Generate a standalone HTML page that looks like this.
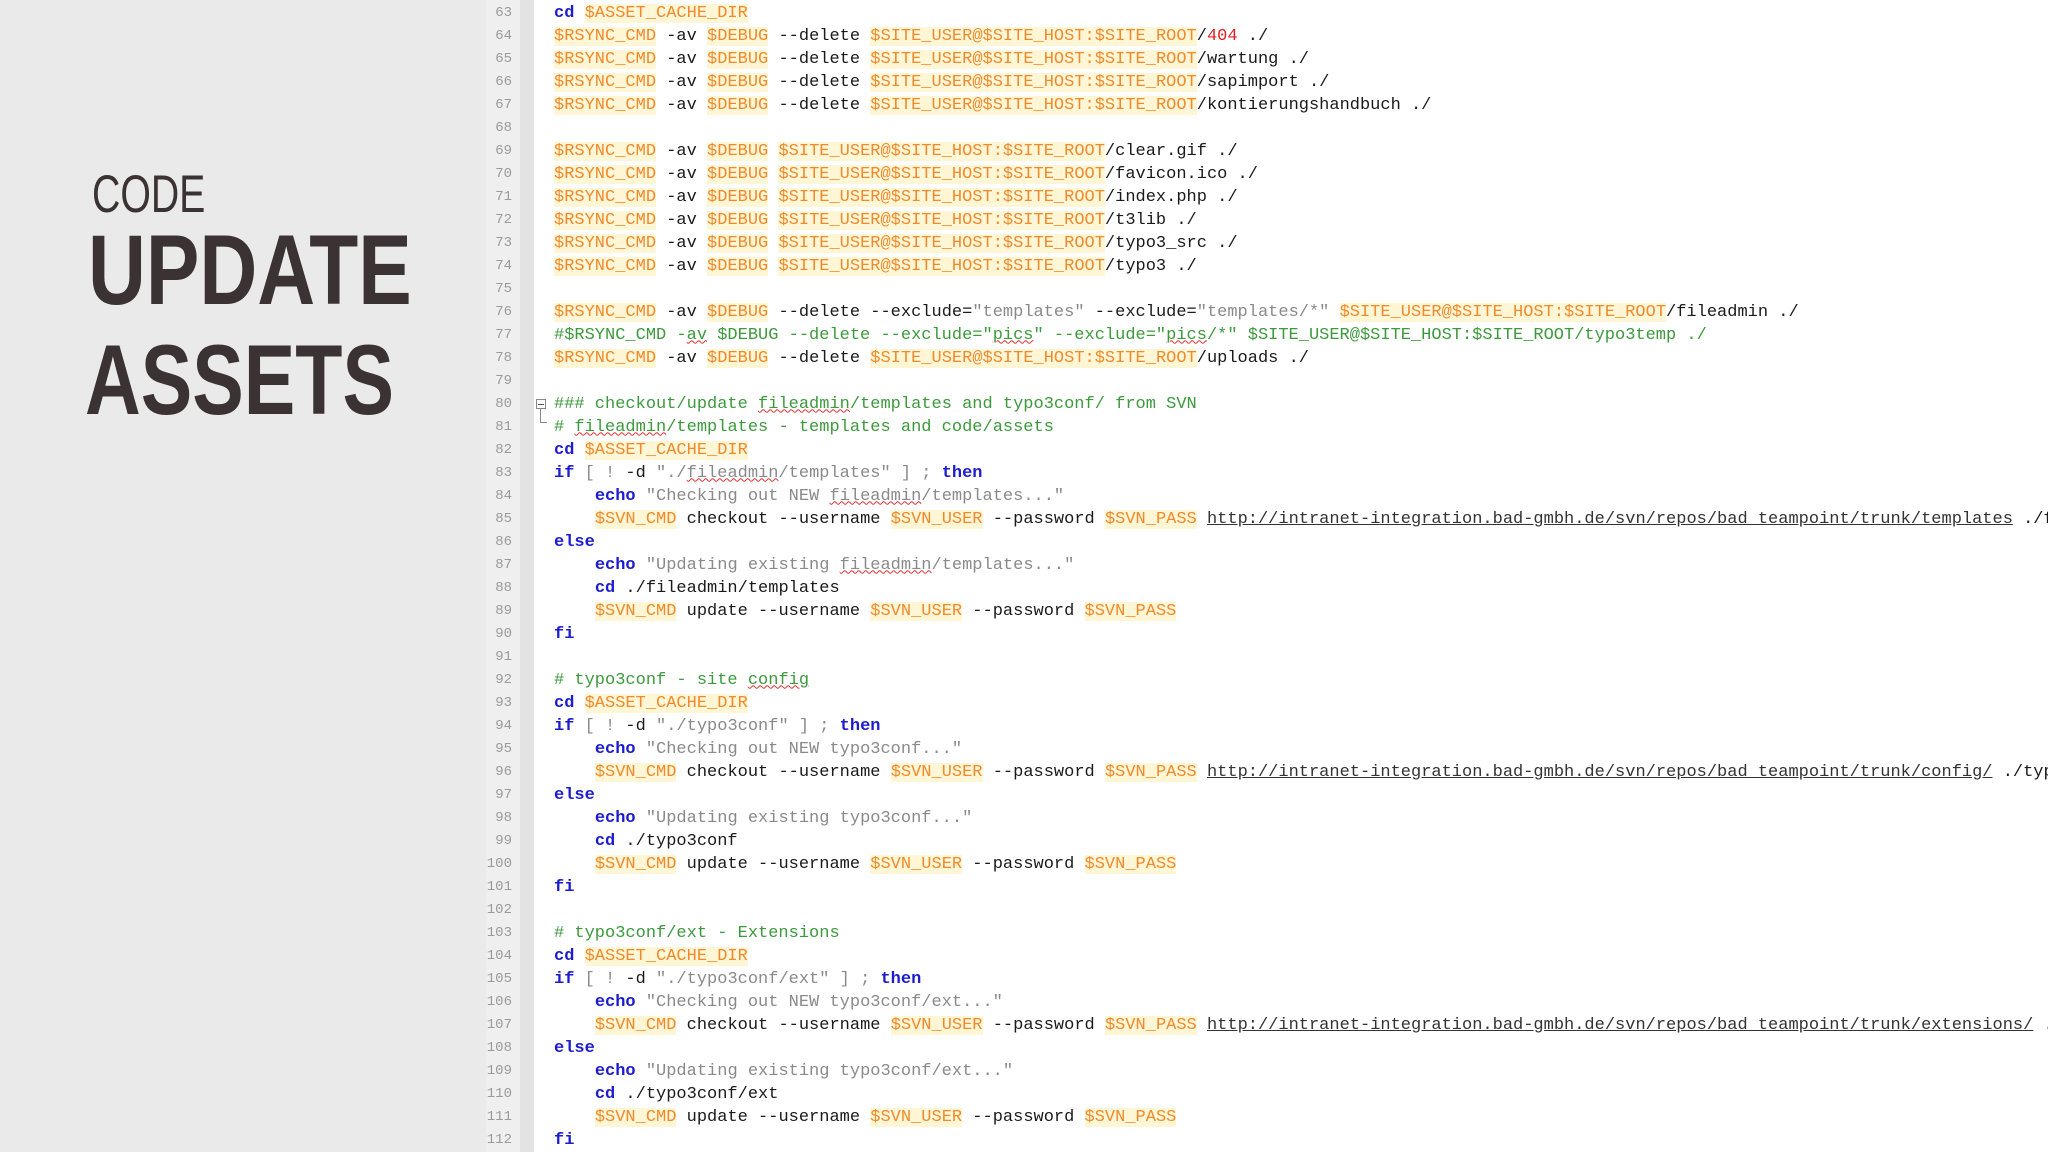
<!DOCTYPE html>
<html><head><meta charset="utf-8"><style>
html,body{margin:0;padding:0;width:2048px;height:1152px;overflow:hidden;background:#ebeaea;}
.title{position:absolute;color:#3b3234;font-family:"Liberation Sans",sans-serif;white-space:nowrap;transform-origin:0 0;}
#gut{position:absolute;left:486px;top:0;width:34px;height:1152px;background:#efefef;}
#gut2{position:absolute;left:520px;top:0;width:14px;height:1152px;background:#e3e3e3;}
#code{position:absolute;left:534px;top:0;width:1514px;height:1152px;background:#fff;overflow:hidden;}
pre{margin:0;position:absolute;font-family:"Liberation Mono","Courier New",monospace;line-height:23px;white-space:pre;}
#ln{left:486px;width:26px;top:1.5px;font-size:14px;color:#9a9a9a;text-align:right;}
#src{left:20px;top:1.5px;font-size:17px;color:#1a1a1a;}
.v{color:#f08a2c;background:#fff6d6;font-style:normal;}
.k{color:#1d1dcf;font-weight:bold;}
.c{color:#3c9a3c;}
.s{color:#8a8a8a;}
.r{color:#e02020;}
.u{text-decoration:underline;color:#333;}
.w{text-decoration:underline wavy #e03030;text-decoration-thickness:1px;}
#fold{position:absolute;left:536px;top:399px;width:8px;height:8px;border:1px solid #888;background:#fff;}
#fold:after{content:"";position:absolute;left:1px;top:3.5px;width:6px;height:1px;background:#555;}
#fl{position:absolute;left:540px;top:409px;width:6px;height:13px;border-left:1px solid #888;border-bottom:1px solid #888;}
</style></head><body>
<div class="title" style="left:92px;top:164px;font-size:53px;transform:scaleX(0.74);">CODE</div>
<div class="title" style="left:88px;top:213px;font-size:99px;font-weight:bold;transform:scaleX(0.81);">UPDATE</div>
<div class="title" style="left:85px;top:323px;font-size:99px;font-weight:bold;transform:scaleX(0.78);">ASSETS</div>
<div id="gut"></div><div id="gut2"></div>
<pre id="ln">63
64
65
66
67
68
69
70
71
72
73
74
75
76
77
78
79
80
81
82
83
84
85
86
87
88
89
90
91
92
93
94
95
96
97
98
99
100
101
102
103
104
105
106
107
108
109
110
111
112</pre>
<div id="code"><pre id="src"><span class="k">cd</span> <i class="v">$ASSET_CACHE_DIR</i>
<i class="v">$RSYNC_CMD</i> -av <i class="v">$DEBUG</i> --delete <i class="v">$SITE_USER@$SITE_HOST:$SITE_ROOT</i>/<span class="r">404</span> ./
<i class="v">$RSYNC_CMD</i> -av <i class="v">$DEBUG</i> --delete <i class="v">$SITE_USER@$SITE_HOST:$SITE_ROOT</i>/wartung ./
<i class="v">$RSYNC_CMD</i> -av <i class="v">$DEBUG</i> --delete <i class="v">$SITE_USER@$SITE_HOST:$SITE_ROOT</i>/sapimport ./
<i class="v">$RSYNC_CMD</i> -av <i class="v">$DEBUG</i> --delete <i class="v">$SITE_USER@$SITE_HOST:$SITE_ROOT</i>/kontierungshandbuch ./

<i class="v">$RSYNC_CMD</i> -av <i class="v">$DEBUG</i> <i class="v">$SITE_USER@$SITE_HOST:$SITE_ROOT</i>/clear.gif ./
<i class="v">$RSYNC_CMD</i> -av <i class="v">$DEBUG</i> <i class="v">$SITE_USER@$SITE_HOST:$SITE_ROOT</i>/favicon.ico ./
<i class="v">$RSYNC_CMD</i> -av <i class="v">$DEBUG</i> <i class="v">$SITE_USER@$SITE_HOST:$SITE_ROOT</i>/index.php ./
<i class="v">$RSYNC_CMD</i> -av <i class="v">$DEBUG</i> <i class="v">$SITE_USER@$SITE_HOST:$SITE_ROOT</i>/t3lib ./
<i class="v">$RSYNC_CMD</i> -av <i class="v">$DEBUG</i> <i class="v">$SITE_USER@$SITE_HOST:$SITE_ROOT</i>/typo3_src ./
<i class="v">$RSYNC_CMD</i> -av <i class="v">$DEBUG</i> <i class="v">$SITE_USER@$SITE_HOST:$SITE_ROOT</i>/typo3 ./

<i class="v">$RSYNC_CMD</i> -av <i class="v">$DEBUG</i> --delete --exclude=<span class="s">"templates"</span> --exclude=<span class="s">"templates/*"</span> <i class="v">$SITE_USER@$SITE_HOST:$SITE_ROOT</i>/fileadmin ./
<span class="c">#$RSYNC_CMD -<span class="w">av</span> $DEBUG --delete --exclude="<span class="w">pics</span>" --exclude="<span class="w">pics</span>/*" $SITE_USER@$SITE_HOST:$SITE_ROOT/typo3temp ./</span>
<i class="v">$RSYNC_CMD</i> -av <i class="v">$DEBUG</i> --delete <i class="v">$SITE_USER@$SITE_HOST:$SITE_ROOT</i>/uploads ./

<span class="c">### checkout/update <span class="w">fileadmin</span>/templates and typo3conf/ from SVN</span>
<span class="c"># <span class="w">fileadmin</span>/templates - templates and code/assets</span>
<span class="k">cd</span> <i class="v">$ASSET_CACHE_DIR</i>
<span class="k">if</span> <span class="s">[ ! </span>-d <span class="s">"./<span class="w">fileadmin</span>/templates" ] ;</span> <span class="k">then</span>
    <span class="k">echo</span> <span class="s">"Checking out NEW <span class="w">fileadmin</span>/templates..."</span>
    <i class="v">$SVN_CMD</i> checkout --username <i class="v">$SVN_USER</i> --password <i class="v">$SVN_PASS</i> <span class="u">http://intranet-integration.bad-gmbh.de/svn/repos/bad_teampoint/trunk/templates</span> ./fileadmin/templates
<span class="k">else</span>
    <span class="k">echo</span> <span class="s">"Updating existing <span class="w">fileadmin</span>/templates..."</span>
    <span class="k">cd</span> ./fileadmin/templates
    <i class="v">$SVN_CMD</i> update --username <i class="v">$SVN_USER</i> --password <i class="v">$SVN_PASS</i>
<span class="k">fi</span>

<span class="c"># typo3conf - site <span class="w">config</span></span>
<span class="k">cd</span> <i class="v">$ASSET_CACHE_DIR</i>
<span class="k">if</span> <span class="s">[ ! </span>-d <span class="s">"./typo3conf" ] ;</span> <span class="k">then</span>
    <span class="k">echo</span> <span class="s">"Checking out NEW typo3conf..."</span>
    <i class="v">$SVN_CMD</i> checkout --username <i class="v">$SVN_USER</i> --password <i class="v">$SVN_PASS</i> <span class="u">http://intranet-integration.bad-gmbh.de/svn/repos/bad_teampoint/trunk/config/</span> ./typo3conf
<span class="k">else</span>
    <span class="k">echo</span> <span class="s">"Updating existing typo3conf..."</span>
    <span class="k">cd</span> ./typo3conf
    <i class="v">$SVN_CMD</i> update --username <i class="v">$SVN_USER</i> --password <i class="v">$SVN_PASS</i>
<span class="k">fi</span>

<span class="c"># typo3conf/ext - Extensions</span>
<span class="k">cd</span> <i class="v">$ASSET_CACHE_DIR</i>
<span class="k">if</span> <span class="s">[ ! </span>-d <span class="s">"./typo3conf/ext" ] ;</span> <span class="k">then</span>
    <span class="k">echo</span> <span class="s">"Checking out NEW typo3conf/ext..."</span>
    <i class="v">$SVN_CMD</i> checkout --username <i class="v">$SVN_USER</i> --password <i class="v">$SVN_PASS</i> <span class="u">http://intranet-integration.bad-gmbh.de/svn/repos/bad_teampoint/trunk/extensions/</span> ./typo3conf/ext
<span class="k">else</span>
    <span class="k">echo</span> <span class="s">"Updating existing typo3conf/ext..."</span>
    <span class="k">cd</span> ./typo3conf/ext
    <i class="v">$SVN_CMD</i> update --username <i class="v">$SVN_USER</i> --password <i class="v">$SVN_PASS</i>
<span class="k">fi</span></pre></div>
<div id="fold"></div><div id="fl"></div>
</body></html>
